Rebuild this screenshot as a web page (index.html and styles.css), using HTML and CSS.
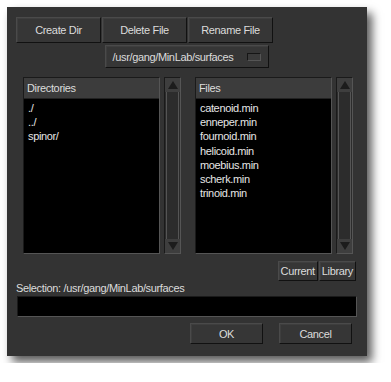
FILE: index.html
```html
<!DOCTYPE html>
<html lang="en">
<head>
    <meta charset="UTF-8">
    <title>File Browser</title>
    <link rel="stylesheet" href="styles.css">
</head>
<body>
    <div class="dialog">
        <div class="top-row">
            <button class="btn wide">Create Dir</button>
            <button class="btn wide">Delete File</button>
            <button class="btn wide">Rename File</button>
        </div>
        <div class="path-row">
            <button class="btn path">/usr/gang/MinLab/surfaces <span class="indicator"></span></button>
        </div>
        <div class="lists">
            <div class="list-group">
                <div class="list">
                    <div class="list-head">Directories</div>
                    <div class="list-body">
                        <div>./</div>
                        <div>../</div>
                        <div>spinor/</div>
                    </div>
                </div>
                <div class="scroll">
                    <div class="arrow up"></div>
                    <div class="track"></div>
                    <div class="arrow down"></div>
                </div>
            </div>
            <div class="list-group">
                <div class="list">
                    <div class="list-head">Files</div>
                    <div class="list-body">
                        <div>catenoid.min</div>
                        <div>enneper.min</div>
                        <div>fournoid.min</div>
                        <div>helicoid.min</div>
                        <div>moebius.min</div>
                        <div>scherk.min</div>
                        <div>trinoid.min</div>
                    </div>
                </div>
                <div class="scroll">
                    <div class="arrow up"></div>
                    <div class="track"></div>
                    <div class="arrow down"></div>
                </div>
            </div>
        </div>
        <div class="shortcut-row">
            <button class="btn small">Current</button>
            <button class="btn small">Library</button>
        </div>
        <div class="selection-label">Selection: /usr/gang/MinLab/surfaces</div>
        <div class="selection-input"></div>
        <div class="action-row">
            <button class="btn action">OK</button>
            <button class="btn action">Cancel</button>
        </div>
    </div>
</body>
</html>
```

FILE: styles.css
```css
body {
    margin: 0;
    background-color: #ffffff;
    font-family: 'Liberation Sans', Arial, sans-serif;
    font-size: 11px;
    letter-spacing: -0.35px;
    color: #dcdcdc;
}
.dialog {
    width: 360px;
    height: 349px;
    margin: 7px;
    background-color: #333333;
    box-shadow: 5px 6px 9px rgba(0, 0, 0, 0.65);
    box-sizing: border-box;
    padding: 10px 10px 0 9px;
    display: flex;
    flex-direction: column;
}
.btn {
    font-family: inherit;
    font-size: 11px;
    letter-spacing: -0.35px;
    color: #dcdcdc;
    background-color: #363636;
    border: 1px solid;
    border-color: #4a4a4a #111111 #111111 #4a4a4a;
    box-shadow: inset 1px 1px 0 #3e3e3e;
    padding: 0;
    margin: 0;
}
.top-row {
    display: flex;
    gap: 1px;
}
.btn.wide {
    width: 85px;
    height: 26px;
}
.path-row {
    display: flex;
    padding-left: 89px;
    margin-top: 2px;
}
.btn.path {
    width: 164px;
    height: 23px;
    display: flex;
    align-items: center;
    justify-content: center;
    gap: 14px;
}
.indicator {
    width: 12px;
    height: 6px;
    background-color: #3a3a3a;
    border: 1px solid;
    border-color: #151515 #555555 #555555 #151515;
}
.lists {
    display: flex;
    gap: 14px;
    margin-top: 9px;
    padding-left: 7px;
}
.list-group {
    display: flex;
    gap: 4px;
    height: 177px;
}
.list {
    width: 137px;
    display: flex;
    flex-direction: column;
    border: 1px solid;
    border-color: #1a1a1a #555555 #555555 #1a1a1a;
    box-sizing: border-box;
}
.list-head {
    height: 20px;
    line-height: 20px;
    padding-left: 3px;
    background-color: #3c3c3c;
    border-bottom: 1px solid #222222;
}
.list-body {
    flex: 1;
    background-color: #000000;
    padding: 2px 0 0 4px;
    line-height: 14.2px;
    color: #e6e6e6;
}
.scroll {
    width: 17px;
    display: flex;
    flex-direction: column;
    background-color: #2c2c2c;
    border: 1px solid;
    border-color: #1a1a1a #555555 #555555 #1a1a1a;
    box-sizing: border-box;
}
.track {
    flex: 1;
    border-left: 1px solid #555555;
    border-right: 1px solid #555555;
    margin: 0 1px;
}
.arrow {
    height: 14px;
    background-color: #3e3e3e;
    position: relative;
}
.arrow::after {
    content: '';
    position: absolute;
    left: 3px;
    width: 0;
    height: 0;
    border-left: 5px solid transparent;
    border-right: 5px solid transparent;
}
.arrow.up::after {
    top: 3px;
    border-bottom: 8px solid #1c1c1c;
}
.arrow.down::after {
    top: 3px;
    border-top: 8px solid #1c1c1c;
}
.shortcut-row {
    display: flex;
    justify-content: flex-end;
    gap: 1px;
    margin-top: 7px;
    padding-right: 1px;
}
.btn.small {
    height: 20px;
    padding: 0 2px;
}
.selection-label {
    margin-top: 0;
    height: 14px;
    line-height: 14px;
}
.selection-input {
    height: 21px;
    margin-top: 1px;
    margin-left: 1px;
    background-color: #000000;
    border: 1px solid;
    border-color: #1a1a1a #555555 #555555 #1a1a1a;
    box-sizing: border-box;
}
.action-row {
    display: flex;
    gap: 16px;
    justify-content: flex-end;
    margin-top: 6px;
    padding-right: 5px;
}
.btn.action {
    width: 73px;
    height: 21px;
}
```
